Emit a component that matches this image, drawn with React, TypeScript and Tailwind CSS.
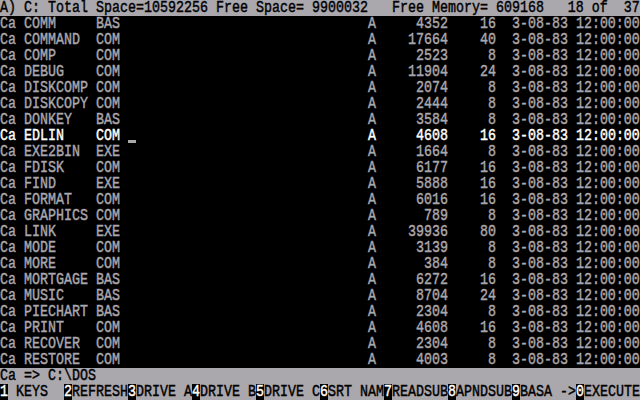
const FILES: [string, string, number, number][] = [
  ["COMM", "BAS", 4352, 16],
  ["COMMAND", "COM", 17664, 40],
  ["COMP", "COM", 2523, 8],
  ["DEBUG", "COM", 11904, 24],
  ["DISKCOMP", "COM", 2074, 8],
  ["DISKCOPY", "COM", 2444, 8],
  ["DONKEY", "BAS", 3584, 8],
  ["EDLIN", "COM", 4608, 16],
  ["EXE2BIN", "EXE", 1664, 8],
  ["FDISK", "COM", 6177, 16],
  ["FIND", "EXE", 5888, 16],
  ["FORMAT", "COM", 6016, 16],
  ["GRAPHICS", "COM", 789, 8],
  ["LINK", "EXE", 39936, 80],
  ["MODE", "COM", 3139, 8],
  ["MORE", "COM", 384, 8],
  ["MORTGAGE", "BAS", 6272, 16],
  ["MUSIC", "BAS", 8704, 24],
  ["PIECHART", "BAS", 2304, 8],
  ["PRINT", "COM", 4608, 16],
  ["RECOVER", "COM", 2304, 8],
  ["RESTORE", "COM", 4003, 8],
];

const KEYS = [
  " KEYS  ",
  "REFRESH",
  "DRIVE A",
  "DRIVE B",
  "DRIVE C",
  "SRT NAM",
  "READSUB",
  "APNDSUB",
  "BASA ->",
  "EXECUTE",
];

const SELECTED = 7;

// tall narrow text, like the 8x16 text-mode font
function Txt({ children }: { children: React.ReactNode }) {
  return <span className="inline-block origin-center scale-y-[1.3]">{children}</span>;
}

function tail(size: number, count: number) {
  return (
    " ".repeat(31) +
    "A" +
    "   " +
    String(size).padStart(6) +
    String(count).padStart(6) +
    "  3-08-83 12:00:00"
  );
}

export default function App() {
  return (
    <div className="w-[640px] h-[400px] overflow-hidden bg-black font-['Liberation_Mono',monospace] text-[13.33px] leading-4 whitespace-pre text-[#aaa7ad] [-webkit-text-stroke:0.35px]">
      <div className="h-4 bg-[#aaa7ad] text-black">
        <Txt>A) C: Total Space=10592256 Free Space= 9900032   Free Memory= 609168   18 of  37</Txt>
      </div>

      {FILES.map(([name, ext, size, count], i) => {
        const sel = i === SELECTED;
        return (
          <div key={name} className={`h-4 flex ${sel ? "text-white" : ""}`}>
            <Txt>{"Ca " + name.padEnd(9) + ext}</Txt>
            {sel ? (
              <>
                <Txt> </Txt>
                <span className="relative w-2 h-4">
                  <span className="absolute left-0 top-[12px] w-2 h-[3px] bg-[#aaa7ad]" />
                </span>
                <Txt>{tail(size, count).slice(2)}</Txt>
              </>
            ) : (
              <Txt>{tail(size, count)}</Txt>
            )}
          </div>
        );
      })}

      <div className="h-4 bg-[#aaa7ad] text-black">
        <Txt>{"Ca => C:\\DOS"}</Txt>
      </div>

      <div className="h-4 flex bg-[#aaa7ad] text-black">
        {KEYS.map((label, i) => (
          <div key={label} className="flex">
            <span className="w-2 h-4 bg-black text-white">
              <Txt>{(i + 1) % 10}</Txt>
            </span>
            <Txt>{label}</Txt>
          </div>
        ))}
      </div>
    </div>
  );
}
